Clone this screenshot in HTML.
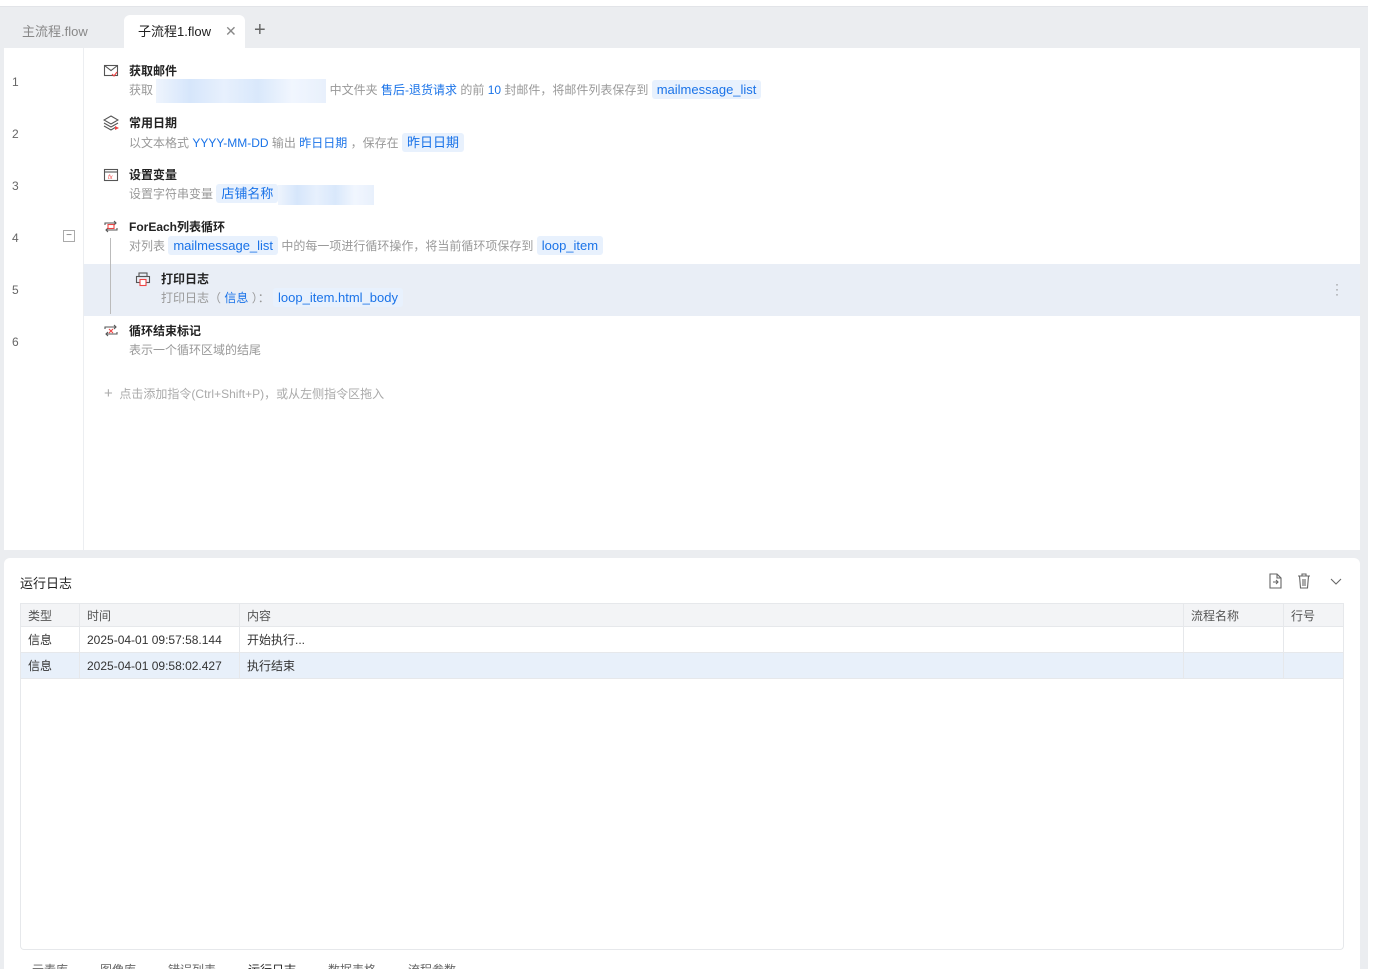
<!DOCTYPE html>
<html><head><meta charset="utf-8"><style>
*{box-sizing:border-box;margin:0;padding:0}
html,body{width:1373px;height:969px;overflow:hidden}
body{background:#fff;font-family:"Liberation Sans","Noto Sans CJK SC",sans-serif;position:relative}
.bg{position:absolute;left:0;top:6px;width:1368px;height:963px;background:#ebedf0;border-top:1px solid #e2e4e8}
.abs{position:absolute}
.tab{position:absolute;top:15px;height:33px;font-size:13px;line-height:33px}
.ed{position:absolute;left:4px;top:48px;width:1356px;height:502px;background:#fff}
.gut{position:absolute;left:0;top:0;width:80px;height:502px;border-right:1px solid #eceef1}
.ln{position:absolute;left:8px;font-size:12px;color:#666}
.row{position:absolute;left:80px;width:1276px;height:52px}
.t{position:absolute;font-size:12px;font-weight:bold;color:#222;white-space:nowrap}
.d{position:absolute;font-size:12px;color:#999;white-space:nowrap}
.b{color:#1a73e8}
.chip{display:inline-block;background:#e8f1fd;color:#1a73e8;padding:0 5px;border-radius:3px;line-height:19px;font-size:13px}
.blur{display:inline-block;height:24px;vertical-align:middle;background:linear-gradient(90deg,#eef4fd,#d6e6fb 20%,#e7f0fd 40%,#d9e8fb 60%,#f1f6fe 80%,#e8f0fc)}
.log{position:absolute;left:4px;top:558px;width:1356px;height:420px;background:#fff;border-radius:6px}
table{position:absolute;left:16px;top:45px;width:1324px;border-collapse:collapse;font-size:12px;color:#333}
td{border:1px solid #e6e8eb;height:26px;padding-left:7px}
tr.h td{background:#f3f4f6;color:#555;height:23px}
tr.s td{background:#e8f0fa}
.bt{position:absolute;top:961px;font-size:12px;color:#666}
</style></head><body>
<div class="bg"></div>
<div class="tab" style="left:22px;color:#888">主流程.flow</div>
<div class="abs" style="left:124px;top:15px;width:121px;height:33px;background:#fff;border-radius:6px 6px 0 0"></div>
<div class="tab" style="left:138px;color:#222">子流程1.flow</div>
<div class="tab" style="left:225px;color:#888;font-size:14px">✕</div>
<div class="tab" style="left:254px;color:#666;font-size:20px;top:14px">+</div>
<div class="ed">
 <div class="gut"></div>
 <div class="ln" style="top:27px">1</div><div class="ln" style="top:79px">2</div><div class="ln" style="top:131px">3</div><div class="ln" style="top:183px">4</div><div class="ln" style="top:235px">5</div><div class="ln" style="top:287px">6</div>
 <div class="abs" style="left:59px;top:182px;width:12px;height:12px;border:1px solid #aaa;font-size:10px;line-height:9px;text-align:center;color:#666">−</div>
 <div class="row" style="top:216px;background:#e9eef6"></div>
 <div class="abs" style="left:106px;top:190px;width:1px;height:76px;background:#bbb"></div>
 <svg class="abs" style="left:99px;top:14px" width="16" height="320" fill="none" stroke-width="1.1">
  <g stroke="#555"><rect x="1.5" y="3.5" width="13" height="10"/><path d="M1.5 3.5l6.5 5 6.5-5"/></g><path d="M9 12l2 2 3-4" stroke="#e44"/>
  <g transform="translate(0,52)" stroke="#555"><path d="M8 2l7 4-7 4-7-4z"/><path d="M1 9l7 4 7-4M1 12l7 4 5-3"/></g><path d="M12 64l4 2-4 2z" fill="#e44" stroke="none"/>
  <g transform="translate(0,104)"><rect x="1.5" y="3.5" width="13" height="11" stroke="#555"/><path d="M1.5 6h13" stroke="#555"/><text x="5" y="13" font-size="6" fill="#e44" stroke="none" font-style="italic">fx</text></g>
  <g transform="translate(0,156)" stroke="#555"><path d="M2 7V5h11M11 3l2 2-2 2M14 10v2H3M5 14l-2-2 2-2"/><rect x="5" y="6.5" width="6" height="4" stroke="#e44"/></g>
  <g transform="translate(0,260)" stroke="#555"><path d="M2 7V5h11M11 3l2 2-2 2M14 10v2H3M5 14l-2-2 2-2"/><path d="M6 7l4 4M10 7l-4 4" stroke="#e44"/></g>
 </svg>
 <svg class="abs" style="left:131px;top:223px" width="16" height="16" fill="none" stroke-width="1.1">
  <g stroke="#555"><rect x="1.5" y="5.5" width="13" height="6"/><rect x="4" y="2" width="8" height="3.5"/></g><rect x="5" y="8.5" width="6" height="6" stroke="#e44" fill="#fff"/>
 </svg>
 <div class="t" style="left:125px;top:14px">获取邮件</div>
 <div class="d" style="left:125px;top:31px">获取 <span class="blur" style="width:170px"></span> 中文件夹 <span class="b">售后-退货请求</span> 的前 <span class="b">10</span> 封邮件，将邮件列表保存到 <span class="chip">mailmessage_list</span></div>
 <div class="t" style="left:125px;top:66px">常用日期</div>
 <div class="d" style="left:125px;top:85px">以文本格式 <span class="b">YYYY-MM-DD</span> 输出 <span class="b">昨日日期</span> ，保存在 <span class="chip">昨日日期</span></div>
 <div class="t" style="left:125px;top:118px">设置变量</div>
 <div class="d" style="left:125px;top:136px">设置字符串变量 <span class="chip">店铺名称</span><span class="blur" style="width:96px;height:20px"></span></div>
 <div class="t" style="left:125px;top:170px">ForEach列表循环</div>
 <div class="d" style="left:125px;top:188px">对列表 <span class="chip">mailmessage_list</span> 中的每一项进行循环操作，将当前循环项保存到 <span class="chip">loop_item</span></div>
 <div class="t" style="left:157px;top:222px">打印日志</div>
 <div class="d" style="left:157px;top:240px">打印日志（ <span class="b">信息</span> ）： <span class="chip">loop_item.html_body</span></div>
 <div class="abs" style="left:1331px;top:234px;color:#888;font-size:12px;line-height:5px">·<br>·<br>·</div>
 <div class="t" style="left:125px;top:274px">循环结束标记</div>
 <div class="d" style="left:125px;top:293px">表示一个循环区域的结尾</div>
 <div class="d" style="left:100px;top:337px;color:#aaa"><span style="font-size:15px">+</span>&nbsp; 点击添加指令(Ctrl+Shift+P)，或从左侧指令区拖入</div>
</div>
<div class="log">
 <div class="abs" style="left:16px;top:15px;font-size:13px;color:#222">运行日志</div>
 <svg class="abs" style="left:1264px;top:14px" width="80" height="18" fill="none" stroke="#666" stroke-width="1.1">
  <path d="M2 2h7l4 4v10H2z M9 2v4h4 M5 10h5M8 8l2 2-2 2"/>
  <path d="M30 4h12M34 4V2h4v2M31.5 4l1 12h7l1-12M35 7v7M37 7v7"/>
  <path d="M63 7l5 5 5-5"/>
 </svg>
 <table>
  <tr class="h"><td style="width:59px">类型</td><td style="width:160px">时间</td><td>内容</td><td style="width:100px">流程名称</td><td style="width:60px">行号</td></tr>
  <tr><td>信息</td><td>2025-04-01 09:57:58.144</td><td>开始执行...</td><td></td><td></td></tr>
  <tr class="s"><td>信息</td><td>2025-04-01 09:58:02.427</td><td>执行结束</td><td></td><td></td></tr>
 </table>
 <div class="abs" style="left:16px;top:120px;width:1324px;height:272px;border:1px solid #e6e8eb;border-top:none;border-radius:0 0 4px 4px"></div>
</div>
<div class="bt" style="left:32px">元素库</div><div class="bt" style="left:100px">图像库</div><div class="bt" style="left:168px">错误列表</div><div class="bt" style="left:248px;color:#222">运行日志</div><div class="bt" style="left:328px">数据表格</div><div class="bt" style="left:408px">流程参数</div>
</body></html>
